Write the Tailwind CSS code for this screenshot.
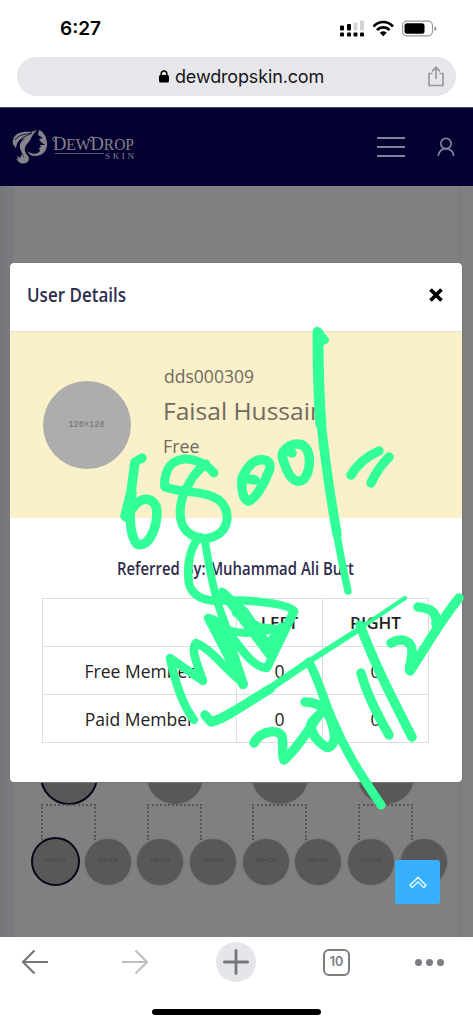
<!DOCTYPE html>
<html lang="en">
<head>
<meta charset="utf-8">
<meta name="viewport" content="width=device-width, initial-scale=1">
<title>dewdropskin.com</title>
<script src="https://cdn.jsdelivr.net/npm/@tailwindcss/browser@4"></script>
</head>
<body class="relative flex h-[1024px] w-[473px] flex-col overflow-hidden bg-white font-['Open_Sans','Noto_Sans',sans-serif]">

<!-- Status bar -->
<div class="flex h-[57px] shrink-0 items-center justify-between pl-[60px] pr-[36px] font-['Inter',sans-serif]">
  <span class="text-[19px] font-semibold leading-none text-black">6:27</span>
  <svg class="h-[20px] w-[98px]" viewBox="0 0 98 20">
    <g fill="#000"><rect x="1" y="6.500" width="4" height="5" rx="1"/><rect x="8" y="5" width="4" height="6.500" rx="1"/><rect x="1" y="13.500" width="4" height="4" rx="1"/><rect x="8" y="13.500" width="4" height="4" rx="1"/><rect x="14.500" y="13.500" width="4" height="4" rx="1"/><rect x="21" y="13.500" width="4" height="4" rx="1"/></g>
    <g fill="#d3d3d3"><rect x="14.500" y="3.500" width="4" height="8" rx="1"/><rect x="21" y="1.500" width="4" height="10" rx="1"/></g>
    <g fill="none" stroke="#000" stroke-width="2.700"><path d="M34.500 7.500C40 1.500 48.500 1.500 54 7.500"/><path d="M38 11.200C41.500 7.400 47 7.400 50.500 11.200"/></g>
    <path d="M40.800 13.700C43 11.900 45.500 11.900 47.700 13.700L44.250 17.200Z"/>
    <rect x="63.500" y="2.200" width="30" height="14.600" rx="4.500" fill="none" stroke="#999" stroke-width="1.200"/>
    <rect x="65.500" y="4.300" width="20" height="10.500" rx="2.500"/>
    <path d="M95.500 7.200C98 8 98 11 95.500 11.800Z" fill="#888"/>
  </svg>
</div>

<!-- Address bar -->
<div class="mx-[17px] flex h-[39px] shrink-0 items-center rounded-full bg-[#e7e7eb] font-['Inter',sans-serif]">
  <svg class="ml-[142px] h-[13px] w-[10px]" viewBox="0 0 10 13"><rect y="5" width="10" height="7.500" rx="1.500"/><path d="M2.200 6V3.700a2.800 2.800 0 0 1 5.600 0V6" fill="none" stroke="#000" stroke-width="1.500"/></svg>
  <span class="ml-[6px] w-[150px] text-[18px] leading-none tracking-[-0.15px] text-[#15151a]">dewdropskin.com</span>
  <svg class="ml-auto mr-[11px] h-[21px] w-[18px]" viewBox="0 0 18 21" fill="none" stroke="#9a9a9e" stroke-width="1.700"><path d="M5.500 7.500H2V19.500H16V7.500H12.500M9 13V1.500M5 5.300L9 1.300L13 5.300"/></svg>
</div>

<!-- Site header -->
<header class="mt-[11px] flex h-[79px] shrink-0 items-center border-t border-[#50506a] bg-[#040031] pl-[12px] pr-[18px]">
  <svg class="h-[36px] w-[37px]" viewBox="0 0 37 36" fill="#858488">
    <path d="M1 11C3 3 12 2 19 3L25 1C18 8 20 10 15 15C11 20 13 23 16 27C19 32 14 36 8 34L4 30L10 31C15 30 9 24 8 19C7 14 10 11 14 9C8 10 5 13 4 19C1 16 0 14 1 11Z"/>
    <path d="M5 27L8 29L10 25L12 29L15 27C15 34 6 35 5 27Z"/>
    <path d="M27 1C31 2 34 7 35 13C36 21 31 27 23 27C19 27 17 25 15 22C21 26 26 25 28 22L27 19L29 18L28 16L33 16L29 13L27 10L31 9L26 6Z"/>
    <path d="M3 11C8 4 14 6 20 4C13 8 8 8 5 16" fill="none" stroke="#040031" stroke-width=".8"/>
  </svg>
  <svg class="ml-[3px] h-[32px] w-[83px]" viewBox="0 0 83 32" fill="#858488" font-family="Liberation Serif, serif"><text x="1" y="18.500" font-size="16" textLength="81" lengthAdjust="spacingAndGlyphs"><tspan font-size="19">D</tspan>EW<tspan font-size="19">D</tspan>ROP</text><path d="M5 6C-1 5 0 11 4 10M41 6C36 5 36 11 40 10" fill="none" stroke="#858488" stroke-width="1"/><path d="M3 22.500H52" stroke="#77767c" stroke-width=".8"/><text x="53" y="27.500" font-size="9" textLength="29">SKIN</text></svg>
  <svg class="ml-auto h-[22px] w-[28px]" viewBox="0 0 28 22" stroke="#82819a" stroke-width="1.900"><path d="M0 2H28M0 11H28M0 20H28"/></svg>
  <svg class="ml-[32px] h-[20px] w-[18px]" viewBox="0 0 18 20" fill="none" stroke="#82819a" stroke-width="1.700"><circle cx="9" cy="6.500" r="5.200"/><path d="M1.200 19C1.800 9.200 16.200 9.200 16.800 19"/></svg>
</header>

<!-- Dimmed page behind the dialog -->
<main class="flex h-[751px] shrink-0 bg-linear-to-r from-[#747578] to-[#7b7c82] to-[12px]">
  <div class="w-[12px] shrink-0"></div>
  <section class="flex w-[448px] shrink-0 flex-col border-x border-[#767679] bg-[#808080]">
    <div class="mt-[562px] flex shrink-0 gap-[49.5px] pl-[28px]">
      <div class="-ml-px -mr-px -mt-px size-[58px] shrink-0 rounded-full border-2 border-[#070718] bg-[#585858]"></div>
      <div class="size-[56px] shrink-0 rounded-full bg-[#585858] shadow-[0_0_2px_#606060]"></div>
      <div class="size-[56px] shrink-0 rounded-full bg-[#585858] shadow-[0_0_2px_#606060]"></div>
      <div class="size-[56px] shrink-0 rounded-full bg-[#585858] shadow-[0_0_2px_#606060]"></div>
    </div>
    <div class="-mt-px flex shrink-0 gap-[50.5px] pl-[28px]">
      <div class="h-[36px] w-[55px] shrink-0 border-x-2 border-t-2 border-dotted border-[#565656]"></div>
      <div class="h-[36px] w-[55px] shrink-0 border-x-2 border-t-2 border-dotted border-[#565656]"></div>
      <div class="h-[36px] w-[55px] shrink-0 border-x-2 border-t-2 border-dotted border-[#565656]"></div>
      <div class="h-[36px] w-[55px] shrink-0 border-x-2 border-t-2 border-dotted border-[#565656]"></div>
    </div>
    <div class="-mt-[3px] flex shrink-0 items-center gap-[6.7px] pl-[19px] font-['Liberation_Mono',monospace] text-[5px] text-[#424242]">
      <div class="-mx-[1.500px] flex size-[49px] shrink-0 items-center justify-center rounded-full border-2 border-[#070718] bg-[#585858]">120×120</div>
      <div class="flex size-[46px] shrink-0 items-center justify-center rounded-full bg-[#585858] shadow-[0_0_2px_#606060]">120×120</div>
      <div class="flex size-[46px] shrink-0 items-center justify-center rounded-full bg-[#585858] shadow-[0_0_2px_#606060]">120×120</div>
      <div class="flex size-[46px] shrink-0 items-center justify-center rounded-full bg-[#585858] shadow-[0_0_2px_#606060]">120×120</div>
      <div class="flex size-[46px] shrink-0 items-center justify-center rounded-full bg-[#585858] shadow-[0_0_2px_#606060]">120×120</div>
      <div class="flex size-[46px] shrink-0 items-center justify-center rounded-full bg-[#585858] shadow-[0_0_2px_#606060]">120×120</div>
      <div class="flex size-[46px] shrink-0 items-center justify-center rounded-full bg-[#585858] shadow-[0_0_2px_#606060]">120×120</div>
      <div class="size-[46px] shrink-0 rounded-full bg-[#585858] shadow-[0_0_2px_#606060]"></div>
    </div>
  </section>
  <div class="grow bg-[#7f7f80]"></div>
</main>

<!-- Browser toolbar -->
<nav class="flex h-[50px] shrink-0 items-center bg-white">
  <svg class="ml-[21px] h-[26px] w-[28px]" viewBox="0 0 28 26" fill="none" stroke="#74787d" stroke-width="2.200"><path d="M27 13H2M13.500 1.500L2 13L13.500 24.500"/></svg>
  <svg class="ml-[72px] h-[26px] w-[28px]" viewBox="0 0 28 26" fill="none" stroke="#c0c0c2" stroke-width="2.200"><path d="M1 13H26M14.500 1.500L26 13L14.500 24.500"/></svg>
  <div class="ml-[67px] flex size-[40px] items-center justify-center rounded-full bg-[#e6e6ea]">
    <svg class="size-[26px]" viewBox="0 0 26 26" stroke="#74787d" stroke-width="2.800" stroke-linecap="round"><path d="M1.400 13H24.600M13 1.400V24.600"/></svg>
  </div>
  <div class="ml-[67px] flex size-[27px] items-center justify-center rounded-[6px] border-2 border-[#7b7e82] font-['Inter',sans-serif] text-[12.5px] font-semibold text-[#7b7e82]">10</div>
  <div class="ml-[65px] flex gap-[4px]"><i class="size-[7px] rounded-full bg-[#7b7e82]"></i><i class="size-[7px] rounded-full bg-[#7b7e82]"></i><i class="size-[7px] rounded-full bg-[#7b7e82]"></i></div>
</nav>
<div class="mx-auto mt-[22px] h-[6px] w-[169px] shrink-0 rounded-full bg-black"></div>

<!-- Back to top -->
<a class="absolute left-[395px] top-[860px] flex h-[44px] w-[45px] items-center justify-center rounded-[3px] bg-[#37b1ff]">
  <svg class="h-[13px] w-[18px]" viewBox="0 0 18 13" fill="none" stroke="#fff" stroke-width="1.300" stroke-linejoin="round"><path d="M1 9.300L9 1.200L17 9.300L14.800 11.600L9 5.900L3.200 11.600Z"/></svg>
</a>

<!-- User details dialog -->
<div class="absolute left-[9px] top-[262px] flex h-[521px] w-[454px] flex-col overflow-hidden rounded-[5px] border border-[#777] bg-white">
  <div class="flex h-[69px] shrink-0 items-center justify-between border-b border-[#e2dfd4] pl-[17px] pr-[19px]">
    <svg class="mt-[-4px] h-[28px] w-[101px] overflow-visible" viewBox="0 0 101 28"><text x="0" y="20.500" font-size="19.500" font-weight="600" fill="#2f2d4e" textLength="99" lengthAdjust="spacingAndGlyphs">User Details</text></svg>
    <svg class="mt-[-4px] size-[14px]" viewBox="0 0 14 14" stroke="#000" stroke-width="3.800"><path d="M1.500 1.500L12.500 12.500M12.500 1.500L1.500 12.500"/></svg>
  </div>
  <div class="flex h-[186px] shrink-0 items-center bg-[#faf1ca] pl-[32.500px] text-[#6f6a60]">
    <div class="flex size-[88px] shrink-0 items-center justify-center rounded-full bg-[#adadad] font-['Liberation_Mono',monospace] text-[8.600px] font-bold text-[#808080]">120×120</div>
    <div class="-mt-[16px] ml-[33px] flex flex-col">
      <svg class="h-[34px] w-[92px] overflow-visible" viewBox="0 0 92 34"><text x="0" y="19.500" font-size="17.500" fill="#6f6a60" textLength="90" lengthAdjust="spacingAndGlyphs">dds000309</text></svg>
      <svg class="h-[36px] w-[165px] overflow-visible" viewBox="0 0 165 36"><text x="-1" y="22.500" font-size="24" fill="#6f6a60" textLength="162" lengthAdjust="spacingAndGlyphs">Faisal Hussain</text></svg>
      <svg class="h-[38px] w-[40px] overflow-visible" viewBox="0 0 40 38"><text x="-1" y="20" font-size="17.500" fill="#6f6a60" textLength="36.500" lengthAdjust="spacingAndGlyphs">Free</text></svg>
    </div>
  </div>
  <svg class="ml-[107px] mt-[36px] h-[28px] w-[240px] shrink-0 overflow-visible" viewBox="0 0 240 28"><text x="0" y="20.500" font-size="18" font-weight="600" fill="#2f2d4e" textLength="237" lengthAdjust="spacingAndGlyphs">Referred By: Muhammad Ali Butt</text></svg>
  <div class="ml-[32px] mt-[16px] grid w-[387px] grid-cols-[194px_86px_106px] grid-rows-[48px_48px_48px] border-l border-t border-[#dedede] text-center text-[17.500px] leading-[48px] text-[#222] *:border-b *:border-r *:border-[#dedede]">
    <div></div><div class="text-[17px] font-semibold">LEFT</div><div class="text-[17px] font-semibold">RIGHT</div>
    <div>Free Member</div><div>0</div><div>0</div>
    <div>Paid Member</div><div>0</div><div>0</div>
  </div>
</div>

<!-- Handwritten ink -->
<svg class="pointer-events-none absolute inset-0 h-[1024px] w-[473px]" viewBox="0 0 473 1024" fill="none" stroke="#33ff99" stroke-width="9.500" stroke-linecap="round" stroke-linejoin="round">
  <path d="M142 458L135 462L131 492L125 516M132 492C129 512 129 535 137 544C148 549 157 528 157 512C156 499 145 495 135 505L126 517"/>
  <path d="M214 473C203 460 185 455 173 463C164 470 164 486 165 487C180 493 205 490 219 500C232 512 228 529 217 535C204 543 187 536 182 524C178 511 181 496 190 482C194 474 199 469 206 464" stroke-width="9"/>
  <path d="M255 480L242 478C241 493 244 499 248 501C255 500 264 484 269 471C272 462 267 459 259 460C253 461 247 467 242 478"/>
  <path d="M292 453L287 450M283 452C290 443 300 442 305 447C312 455 310 472 304 479C298 484 291 480 287 470C283 461 281 456 283 452"/>
  <path d="M351 475C358 463 368 456 379 451M371 483C376 472 382 464 389 457"/>
  <path d="M317 331L325 340L320 342L317 331" fill="#33ff99" stroke-width="8"/>
  <path d="M318 333C318 370 319 400 321 424" stroke-width="11"/>
  <path d="M321 422C325 460 331 500 337 534" stroke-width="9.500"/>
  <path d="M336 530C340 553 344 573 348 591" stroke-width="7.500"/>
  <path d="M200 537L196 541C188 555 187 570 189 584C193 597 204 600 216 601C238 599 286 602 294 611L271 657L222 592L245 612L270 651" stroke-width="8.500"/>
  <path d="M205 541C209 567 214 592 220 610L227 629C241 636 260 632 276 629L259 627L236 613" stroke-width="8"/>
  <path d="M223 594L248 619L268 647L282 628" stroke-width="11"/>
  <path d="M194 720C184 707 176 686 170 658L203 681C198 665 190 650 196 643C211 649 221 665 242 682L208 618L243 685L229 640L208 618C230 621 244 667 267 668L294 612" stroke-width="8.500"/>
  <path d="M219 629L232 651L243 684" stroke-width="10"/>
  <path d="M205 715L211 722C225 719 248 702 270 689" stroke-width="9.500"/>
  <path d="M266 691L310 661" stroke-width="7.500"/>
  <path d="M308 662L355 632" stroke-width="6"/>
  <path d="M353 633L405 598" stroke-width="4.500"/>
  <path d="M309 662C320 683 324 701 332 719C346 753 361 775 381 805" stroke-width="9"/>
  <path d="M254 743C261 730 278 729 282 736C284 743 281 754 284 760C296 750 310 728 318 716"/>
  <path d="M305 702C322 702 331 713 334 732C336 743 330 749 326 747C318 742 311 735 311 724C313 719 319 716 323 711"/>
  <path d="M361 673C367 695 378 716 389 735M360 625C374 663 393 700 412 737"/>
  <path d="M391 643C403 637 411 641 412 650C413 660 408 666 410 671C423 652 438 624 459 598M418 607C425 608 438 609 436 624"/>
</svg>
</body>
</html>
